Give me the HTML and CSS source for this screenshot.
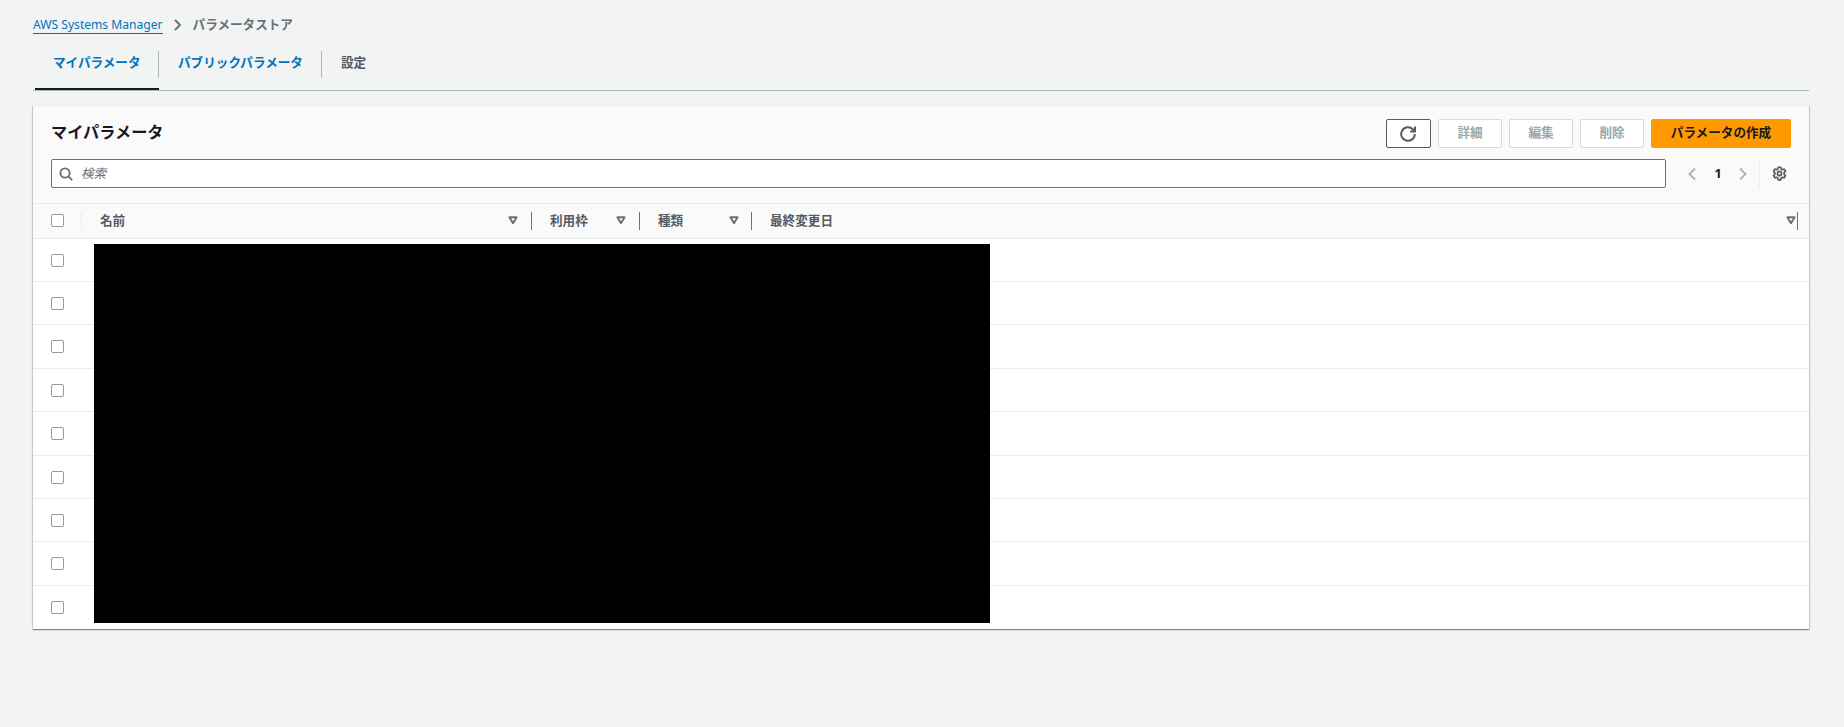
FILE: index.html
```html
<!DOCTYPE html>
<html lang="ja">
<head>
<meta charset="utf-8">
<title>パラメータストア</title>
<link rel="stylesheet" href="styles.css">
</head>
<body>
<div class="page">
  <nav class="crumbs">
    <a class="crumb-link" href="#">AWS Systems Manager</a>
    <svg class="crumb-sep" viewBox="0 0 10 12" width="10" height="12"><path d="M2 1l5 5-5 5"/></svg>
    <span class="crumb-current">パラメータストア</span>
  </nav>
  <div class="tabs">
    <div class="tab tab-active"><span class="tab-label tab-first">マイパラメータ</span></div>
    <div class="tab"><span class="tab-label tab-second">パブリックパラメータ</span></div>
    <div class="tab"><span class="tab-label tab-last">設定</span></div>
  </div>
  <section class="card">
    <div class="card-head">
      <div class="title-row">
        <h2 class="title">マイパラメータ</h2>
        <div class="actions">
          <button class="btn btn-icon" aria-label="更新">
            <svg viewBox="0 0 16 16" width="16" height="16"><path d="M10.2 5.4h4.8V.6"/><path d="M14.8 8a6.8 6.8 0 1 1-2-4.8l2 2"/></svg>
          </button>
          <button class="btn btn-off">詳細</button>
          <button class="btn btn-off">編集</button>
          <button class="btn btn-off">削除</button>
          <button class="btn btn-primary">パラメータの作成</button>
        </div>
      </div>
      <div class="search-row">
        <div class="search">
          <svg class="search-icon" viewBox="0 0 14 14" width="14" height="14"><circle cx="6" cy="6" r="4.6"/><path d="M9.4 9.4l3.8 3.8"/></svg>
          <span class="placeholder">検索</span>
        </div>
        <div class="pager">
          <svg class="pager-arrow" viewBox="0 0 10 14" width="10" height="14"><path d="M8 1.5L2.5 7 8 12.5"/></svg>
          <span class="pager-num">1</span>
          <svg class="pager-arrow" viewBox="0 0 10 14" width="10" height="14"><path d="M2 1.5L7.5 7 2 12.5"/></svg>
          <span class="pager-sep"></span>
          <svg class="gear" viewBox="0 0 16 16" width="15" height="15"><path d="M6.6 1.3h2.8l.4 1.9 1.3.75 1.85-.6 1.4 2.4-1.45 1.5v1.5l1.45 1.5-1.4 2.4-1.85-.6-1.3.75-.4 1.9H6.6l-.4-1.9-1.3-.75-1.85.6-1.4-2.4 1.45-1.5v-1.5L1.65 5.75l1.4-2.4 1.85.6 1.3-.75z"/><circle cx="8" cy="8" r="2.2"/></svg>
        </div>
      </div>
    </div>
    <div class="thead">
      <div class="cell cell-select"><span class="check"></span></div>
      <div class="cell">名前<svg class="filter" viewBox="0 0 10 9" width="10" height="9"><path d="M1.4 1.2h7.2L5 7.2z"/></svg></div>
      <div class="cell">利用枠<svg class="filter" viewBox="0 0 10 9" width="10" height="9"><path d="M1.4 1.2h7.2L5 7.2z"/></svg></div>
      <div class="cell cell-type">種類<svg class="filter" viewBox="0 0 10 9" width="10" height="9"><path d="M1.4 1.2h7.2L5 7.2z"/></svg></div>
      <div class="cell cell-last">最終変更日<svg class="filter" viewBox="0 0 10 9" width="10" height="9"><path d="M1.4 1.2h7.2L5 7.2z"/></svg></div>
    </div>
    <div class="tbody">
      <div class="row"><span class="check"></span></div>
      <div class="row"><span class="check"></span></div>
      <div class="row row-tall"><span class="check"></span></div>
      <div class="row"><span class="check"></span></div>
      <div class="row row-tall"><span class="check"></span></div>
      <div class="row"><span class="check"></span></div>
      <div class="row"><span class="check"></span></div>
      <div class="row row-tall"><span class="check"></span></div>
      <div class="row row-end"><span class="check"></span></div>
    </div>
    <div class="redaction"></div>
  </section>
</div>
</body>
</html>
```
FILE: styles.css
```css
* { box-sizing: border-box; }
html, body { margin: 0; height: 100%; }
body {
  background: #f2f3f3;
  color: #16191f;
  font-family: "Noto Sans", "Noto Sans CJK JP", sans-serif;
  font-size: 12.6px;
  line-height: 18px;
  overflow: hidden;
}
.page { padding: 0 35px 0 33px; }

.crumbs { display: flex; align-items: center; height: 50px; }
.crumb-link {
  color: #0073bb;
  font-size: 12.1px;
  text-decoration: none;
  border-bottom: 1px solid #0073bb;
  line-height: 17px;
}
.crumb-sep { margin: 0 10px 0 10px; }
.crumb-sep path { fill: none; stroke: #687078; stroke-width: 1.9; }
.crumb-current { color: #687078; font-weight: 700; }

.tabs { display: flex; height: 41px; border-bottom: 1px solid #aab7b8; padding-left: 2px; }
.tab { height: 40px; padding-top: 1px; border-bottom: 2px solid transparent; font-weight: 700; color: #0073bb; }
.tab-active { border-bottom-color: #16191f; }
.tab-label { display: block; height: 27px; line-height: 23px; border-right: 1px solid #aab7b8; }
.tab-first { width: 124px; padding-left: 18px; }
.tab-second { width: 163px; padding-left: 19px; }
.tab-last { padding-left: 19px; border-right: 0; color: #545b64; }

.card {
  position: relative;
  margin-top: 14px;
  height: 524px;
  background: #fff;
  border-top: 1px solid #eaeded;
  box-shadow: 0 1px 1px 0 rgba(0, 28, 36, .3), 1px 1px 1px 0 rgba(0, 28, 36, .15), -1px 1px 1px 0 rgba(0, 28, 36, .15);
}
.card-head { background: #fafafa; padding: 13px 18px 15px; border-bottom: 1px solid #eaeded; }
.title-row { display: flex; align-items: center; justify-content: space-between; height: 29px; }
.title { margin: 0 0 3px; font-size: 16.2px; font-weight: 700; line-height: 26px; }
.actions { display: flex; gap: 7px; }
.btn {
  height: 29px;
  width: 64px;
  padding: 0 0 2px;
  border: 1px solid #d5dbdb;
  border-radius: 2px;
  background: #fff;
  font: 700 12.6px/18px "Noto Sans", "Noto Sans CJK JP", sans-serif;
  display: flex;
  align-items: center;
  justify-content: center;
}
.btn-icon { width: 45px; padding: 0 1px 0 0; border-color: #545b64; }
.btn-icon path { fill: none; stroke: #545b64; stroke-width: 2; }
.btn-off { color: #9aa8a9; }
.btn-primary { width: 140px; background: #f90; border-color: #f90; color: #16191f; }

.search-row { display: flex; margin-top: 11px; height: 29px; }
.search {
  flex: 1;
  display: flex;
  align-items: center;
  background: #fff;
  border: 1px solid #687078;
  border-radius: 2px;
  padding-left: 7px;
}
.search-icon circle, .search-icon path { fill: none; stroke: #687078; stroke-width: 1.9; }
.placeholder { margin-left: 8px; color: #687078; font-style: italic; }
.pager { width: 125px; display: flex; align-items: center; padding-left: 21px; }
.pager-arrow path { fill: none; stroke: #aab7b8; stroke-width: 2; }
.pager-num { width: 8px; margin: 0 16px 0 17px; font-weight: 700; text-align: center; }
.pager-sep { width: 1px; height: 29px; margin: 0 12px 0 11px; background: #eaeded; }
.gear path, .gear circle { fill: none; stroke: #545b64; stroke-width: 1.8; stroke-linejoin: round; }

.thead {
  display: grid;
  grid-template-columns: 49px 450px 108px 112px 1046px;
  align-items: center;
  height: 35px;
  background: #fafafa;
  border-bottom: 1px solid #eaeded;
}
.cell {
  display: flex;
  align-items: center;
  justify-content: space-between;
  height: 18px;
  padding: 0 13px 0 18px;
  border-right: 1px solid #687078;
  color: #545b64;
  font-weight: 700;
}
.cell-select { border-right-color: #eaeded; padding-right: 0; }
.cell-select .check { margin-bottom: 1px; }
.cell-type { padding-right: 12px; }
.cell-last { padding-right: 1px; }
.filter { margin-bottom: 1px; }
.filter path { fill: none; stroke: #687078; stroke-width: 1.9; stroke-linejoin: round; }

.check {
  display: block;
  width: 13px;
  height: 13px;
  border: 1px solid #8f9ca3;
  border-radius: 2px;
  background: #fff;
}
.row {
  display: flex;
  align-items: center;
  height: 43px;
  padding-left: 18px;
  border-bottom: 1px solid #eaeded;
}
.row-tall { height: 44px; }
.row-end { border-bottom: 0; }
.redaction {
  position: absolute;
  left: 61px;
  top: 138px;
  width: 896px;
  height: 379px;
  background: #000;
}
```
